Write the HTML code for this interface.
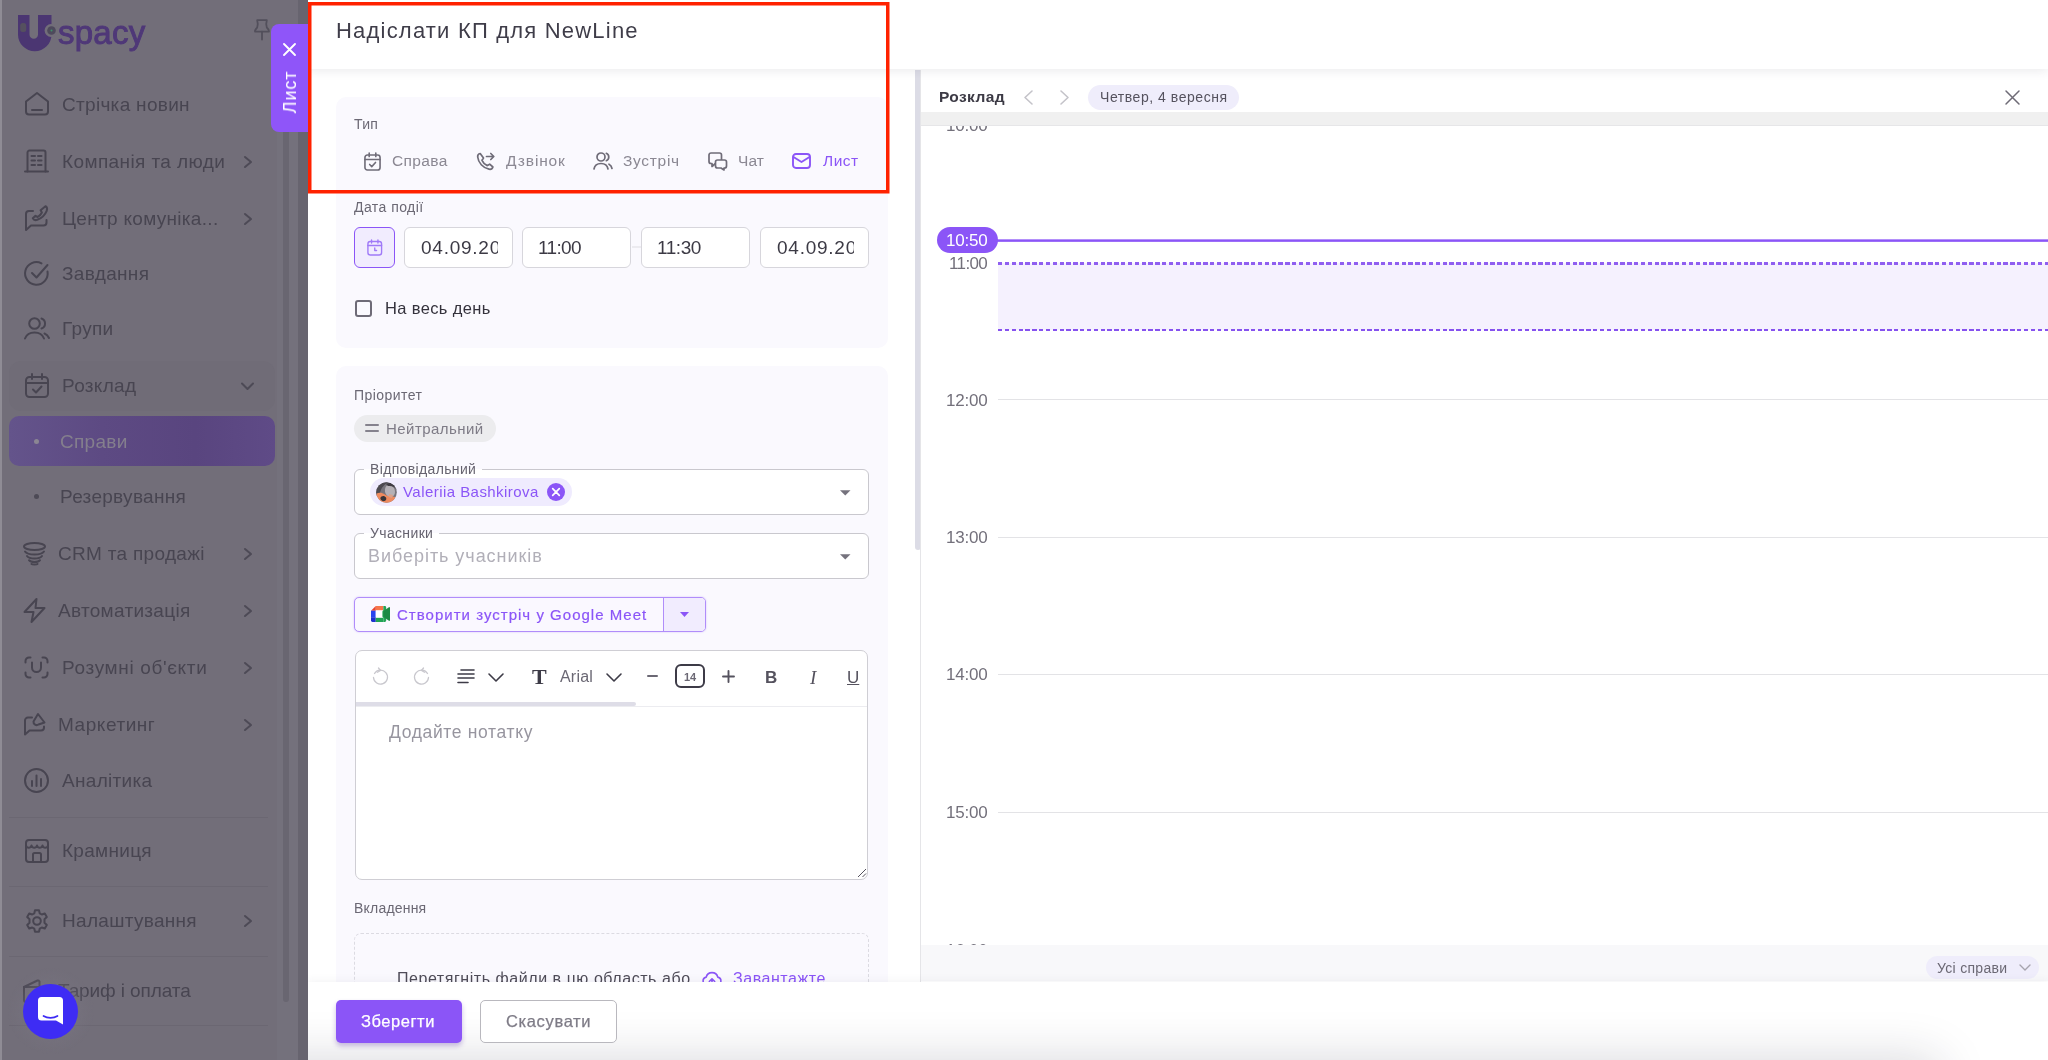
<!DOCTYPE html>
<html lang="uk">
<head>
<meta charset="utf-8">
<title>Uspacy — Надіслати КП для NewLine</title>
<style>
*{box-sizing:border-box;margin:0;padding:0}
html,body{width:2048px;height:1060px;overflow:hidden;background:#fff}
body{font-family:"Liberation Sans",sans-serif;position:relative;color:#4a4755}
.abs{position:absolute}
.t{position:absolute;white-space:nowrap;line-height:1;transform:translateY(-50%);will-change:transform}
svg{position:absolute;overflow:visible}
/* ---------- sidebar (dimmed) ---------- */
#side{position:absolute;left:0;top:0;width:308px;height:1060px;background:#726e79;overflow:hidden}
#side .strip{position:absolute;left:298px;top:0;width:10px;height:1060px;background:#67646f}
#side .strip2{position:absolute;left:277px;top:70px;width:21px;height:990px;background:#74717c}
#side .sb{position:absolute;left:283px;top:70px;width:6px;height:932px;background:#696671;border-radius:0 0 3px 3px}
#side .nav{color:#484551;font-size:19px;letter-spacing:.3px}
#side .hr{position:absolute;left:9px;width:259px;height:1px;background:#6b6772}
#side .ic{stroke:#484551;fill:none;stroke-width:2;stroke-linecap:round;stroke-linejoin:round}
#side .chev{stroke:#4d4a56;fill:none;stroke-width:2;stroke-linecap:round;stroke-linejoin:round}
/* ---------- panel ---------- */
#panel{position:absolute;left:308px;top:0;width:1740px;height:1060px;background:#fff;overflow:hidden}

#panel .lbl{font-size:14px;color:#6b6874;letter-spacing:.45px}
#panel .card{position:absolute;left:28px;width:552px;background:#faf9fe;border-radius:10px}
.ti{stroke:#6f6c78;fill:none;stroke-width:1.7;stroke-linecap:round;stroke-linejoin:round}
.typ{font-size:15.500px;color:#8b8893;letter-spacing:.55px}
.inp{position:absolute;top:227px;height:41px;width:109px;overflow:hidden;border:1px solid #d7d6dc;border-radius:6px;background:#fff}
.inp span{will-change:transform;position:absolute;left:15.500px;top:10px;width:77px;overflow:hidden;font-size:19px;color:#3c3a45;letter-spacing:.75px;white-space:nowrap;line-height:1}
.fs{position:absolute;left:46px;width:515px;height:46px;border:1px solid #c9c8ce;border-radius:6px;background:#fff}
.fs .lg{will-change:transform;position:absolute;left:9px;top:-9px;height:16px;padding:0 6px;background:linear-gradient(180deg,#faf9fe 0,#faf9fe 8px,#fff 8px,#fff 100%);font-size:14px;color:#66636f;letter-spacing:.35px;line-height:16px;white-space:nowrap}
.hl{position:absolute;left:690px;width:1050px;height:1px;background:#e3e3e6}
.tm{font-size:17px;color:#73707b;letter-spacing:-.2px}
.tb{stroke:#3d3b47;fill:none;stroke-width:1.6;stroke-linecap:round;stroke-linejoin:round}
</style>
</head>
<body>
<div id="side">
  <div class="strip2"></div><div class="sb"></div><div class="strip"></div>
  <div class="abs" style="left:0;top:0;width:2px;height:1060px;background:#8f8c95"></div>
  <!-- logo -->
  <svg style="left:18px;top:15px" width="36" height="38" viewBox="0 0 36 38">
    <path d="M0 0H11.500V19.500a4.250 4.250 0 0 0 8.500 0V0H33.500V19.500a16.750 16.750 0 0 1-33.500 0Z" fill="#4b3672"/>
    <circle cx="33" cy="15.5" r="6.4" fill="#726e79"/>
    <circle cx="33.5" cy="15.5" r="4.3" fill="#4e4a5c"/>
    <circle cx="33.5" cy="15.5" r="1" fill="#3f8f6a"/>
    <rect x="2.2" y="8" width="6" height="9" rx="2.5" fill="#55505f"/>
  </svg>
  <div class="t" style="left:58px;font-size:33px;color:#4f3878;letter-spacing:.25px;top:16px;transform:none;-webkit-text-stroke:.95px #4f3878">spacy</div>
  <!-- pin -->
  <svg style="left:254px;top:19px" width="16" height="22" viewBox="0 0 16 22" fill="none" stroke="#524f5b" stroke-width="1.8" stroke-linejoin="round" stroke-linecap="round">
    <path d="M3.2 1.2H12.8C12 4 12 6.5 12.8 8.5C14 9.5 15 11 15 12.6H1C1 11 2 9.5 3.2 8.5C4 6.5 4 4 3.2 1.2Z"/><path d="M8 12.6V20.5"/>
  </svg>
  <!-- nav items -->
  <svg class="ic" style="left:25px;top:92px" width="24" height="24" viewBox="0 0 24 24"><path d="M1 9.5L12 1L23 9.5V19.5a3 3 0 0 1-3 3H4a3 3 0 0 1-3-3Z"/><path d="M7 18H17"/></svg>
  <div class="t nav" style="left:62px;top:95px;transform:none">Стрічка новин</div>

  <svg class="ic" style="left:24px;top:149px" width="25" height="24" viewBox="0 0 25 24"><path d="M3.5 22.5V3.5a2 2 0 0 1 2-2H19.5a2 2 0 0 1 2 2V22.5"/><path d="M1 22.5H24"/><path d="M7.5 7H11M14 7H17.5M7.5 11.5H11M14 11.5H17.5M7.5 16H11M14 16H17.5"/></svg>
  <div class="t nav" style="left:62px;letter-spacing:.4px;top:152px;transform:none">Компанія та люди</div>
  <svg class="chev" style="left:244px;top:156px" width="8" height="12" viewBox="0 0 8 12"><path d="M1 1L7 6L1 11"/></svg>

  <svg class="ic" style="left:24px;top:205px" width="25" height="27" viewBox="0 0 25 27"><path d="M9 6H5a3 3 0 0 0-3 3V25L7 20.5H19.5a3 3 0 0 0 3-3V15"/><path d="M21.5 1.2c1.6 1 2 2.6 1.2 4.6c-1.7 4.2-5.500 7.500-9.500 9c-2 .7-3.500.2-4.400-1.500l2.700-2.500l2.200 1.200c1.800-1 3.300-2.600 4.200-4.500l-1.300-2.200Z"/></svg>
  <div class="t nav" style="left:62px;top:209px;transform:none">Центр комуніка...</div>
  <svg class="chev" style="left:244px;top:213px" width="8" height="12" viewBox="0 0 8 12"><path d="M1 1L7 6L1 11"/></svg>

  <svg class="ic" style="left:24px;top:261px" width="26" height="26" viewBox="0 0 26 26"><path d="M23.500 10.500A11.3 11.3 0 1 1 17.500 2.400"/><path d="M8 12L12.500 16.500L23.500 4"/></svg>
  <div class="t nav" style="left:62px;top:264px;transform:none">Завдання</div>

  <svg class="ic" style="left:24px;top:317px" width="26" height="23" viewBox="0 0 26 23"><circle cx="10.500" cy="6.500" r="5.300"/><path d="M1 21.500c1.500-4 5-6 9.500-6s8 2 9.500 6"/><path d="M17.500 1.500a5.300 5.300 0 0 1 0 10"/><path d="M20.500 16.500c2 .8 3.500 2.300 4.500 4.500"/></svg>
  <div class="t nav" style="left:62px;top:319px;transform:none">Групи</div>

  <div class="abs" style="left:9px;top:361px;width:266px;height:50px;border-radius:12px;background:#706c77"></div>
  <svg class="ic" style="left:25px;top:373px" width="24" height="25" viewBox="0 0 24 25"><rect x="1" y="4" width="22" height="20" rx="3.500"/><path d="M1 10H23M7 1V6M17 1V6"/><path d="M8 16.500L11 19.500L16.500 13.500"/></svg>
  <div class="t nav" style="left:62px;top:376px;transform:none">Розклад</div>
  <svg class="chev" style="left:241px;top:382px" width="13" height="9" viewBox="0 0 13 9"><path d="M1 1.500L6.500 7L12 1.500"/></svg>

  <div class="abs" style="left:9px;top:416px;width:266px;height:50px;border-radius:10px;background:linear-gradient(90deg,#64548b 0%,#5d4a83 35%,#59457f 70%,#5f4b87 100%)"></div>
  <div class="abs" style="left:34px;top:438.500px;width:5px;height:5px;border-radius:50%;background:#8b8693"></div>
  <div class="t nav" style="left:60px;color:#847f8d;top:432px;transform:none">Справи</div>
  <div class="abs" style="left:34px;top:493.500px;width:5px;height:5px;border-radius:50%;background:#4d4a56"></div>
  <div class="t nav" style="left:60px;top:487px;transform:none">Резервування</div>

  <svg class="ic" style="left:23px;top:542px" width="23" height="24" viewBox="0 0 23 24"><ellipse cx="11.500" cy="4.500" rx="10.500" ry="3.500"/><path d="M2 9.500c1.500 2.200 5 3 9.500 3s8-.800 9.500-3"/><path d="M4 14c1.300 1.800 4 2.500 7.500 2.500s6.200-.700 7.500-2.500"/><path d="M6 18.200c1 1.400 3 1.900 5.500 1.900s4.500-.500 5.500-1.900"/><path d="M8.500 22c.8.700 5.200.700 6 0"/></svg>
  <div class="t nav" style="left:58px;top:544px;transform:none">CRM та продажі</div>
  <svg class="chev" style="left:244px;top:548px" width="8" height="12" viewBox="0 0 8 12"><path d="M1 1L7 6L1 11"/></svg>

  <svg class="ic" style="left:23px;top:598px" width="23" height="25" viewBox="0 0 23 25"><path d="M13.500 1L1.500 14H10.500L8.500 24L21.500 10H12.500Z"/></svg>
  <div class="t nav" style="left:58px;top:601px;transform:none">Автоматизація</div>
  <svg class="chev" style="left:244px;top:605px" width="8" height="12" viewBox="0 0 8 12"><path d="M1 1L7 6L1 11"/></svg>

  <svg class="ic" style="left:24px;top:656px" width="25" height="23" viewBox="0 0 25 23"><path d="M1.500 6.500V5a3.500 3.500 0 0 1 3.500-3.500H6.500M18.500 1.500H20a3.500 3.500 0 0 1 3.500 3.500V6.500M23.500 16.500V18a3.500 3.500 0 0 1-3.500 3.500H18.500M6.500 21.500H5a3.500 3.500 0 0 1-3.500-3.500V16.500"/><path d="M8 6.500V11.500a4.500 4.500 0 0 0 9 0V6.500"/></svg>
  <div class="t nav" style="left:62px;letter-spacing:.65px;top:658px;transform:none">Розумні об'єкти</div>
  <svg class="chev" style="left:244px;top:662px" width="8" height="12" viewBox="0 0 8 12"><path d="M1 1L7 6L1 11"/></svg>

  <svg class="ic" style="left:24px;top:713px" width="22" height="23" viewBox="0 0 22 23"><path d="M8 4.500H4a3 3 0 0 0-3 3V21.500L5.500 17.500H17a3 3 0 0 0 3-3V13.500"/><path d="M14 1L20.500 9.500L14.500 11.500a3.200 3.200 0 0 1-5-3Z"/></svg>
  <div class="t nav" style="left:58px;letter-spacing:.55px;top:715px;transform:none">Маркетинг</div>
  <svg class="chev" style="left:244px;top:719px" width="8" height="12" viewBox="0 0 8 12"><path d="M1 1L7 6L1 11"/></svg>

  <svg class="ic" style="left:24px;top:768px" width="25" height="25" viewBox="0 0 25 25"><circle cx="12.500" cy="12.500" r="11.500"/><path d="M8 18V13M12.500 18V7.500M17 18V11"/></svg>
  <div class="t nav" style="left:62px;top:771px;transform:none">Аналітика</div>

  <div class="hr" style="top:817px"></div>
  <svg class="ic" style="left:25px;top:839px" width="24" height="24" viewBox="0 0 24 24"><rect x="1" y="1" width="22" height="22" rx="3"/><path d="M1 6.500c1 3 4.500 3 5.500 0c1 3 4.500 3 5.500 0c1 3 4.500 3 5.500 0c1 3 4.500 3 5.500 0"/><path d="M8 23V15.500a1.500 1.500 0 0 1 1.500-1.500H14.500a1.500 1.500 0 0 1 1.500 1.500V23"/></svg>
  <div class="t nav" style="left:62px;top:841px;transform:none">Крамниця</div>
  <div class="hr" style="top:886px"></div>
  <svg class="ic" style="left:25px;top:909px" width="24" height="24" viewBox="0 0 24 24"><circle cx="12" cy="12" r="3.800"/><path d="M10 1.200H14L14.700 4.300L16.800 5.500L19.800 4.500L21.800 8L19.500 10.200V13.800L21.800 16L19.800 19.500L16.800 18.500L14.700 19.700L14 22.800H10L9.300 19.700L7.200 18.500L4.200 19.500L2.200 16L4.500 13.800V10.200L2.200 8L4.200 4.500L7.200 5.500L9.300 4.300Z"/></svg>
  <div class="t nav" style="left:62px;top:911px;transform:none">Налаштування</div>
  <svg class="chev" style="left:244px;top:915px" width="8" height="12" viewBox="0 0 8 12"><path d="M1 1L7 6L1 11"/></svg>
  <div class="hr" style="top:956px"></div>
  <svg class="ic" style="left:23px;top:979px" width="24" height="24" viewBox="0 0 24 24"><path d="M1 8V21a2 2 0 0 0 2 2H21a2 2 0 0 0 2-2V8Z"/><path d="M1 8L14.500 1.500a1.500 1.500 0 0 1 2 1V8"/></svg>
  <div class="t nav" style="left:58px;letter-spacing:-.1px;top:981px;transform:none">Тариф і оплата</div>
  <div class="hr" style="top:1025px"></div>
  <!-- chat bubble -->
  <div class="abs" style="left:6px;top:966px;width:90px;height:90px;border-radius:50%;background:radial-gradient(circle,rgba(122,118,131,.35) 40%,rgba(118,114,127,0) 68%)"></div>
  <div class="abs" style="left:23px;top:984px;width:55px;height:55px;border-radius:50%;background:#3e2cf4"></div>
  <svg style="left:38px;top:997px" width="25" height="28" viewBox="0 0 25 28"><path d="M3.500 0H21.500a3.500 3.500 0 0 1 3.500 3.500V27.500L18 23.500H3.500a3.500 3.500 0 0 1-3.500-3.500V3.500a3.500 3.500 0 0 1 3.500-3.500Z" fill="#fff"/><path d="M5.500 19c4 2.600 10 2.600 14 0" fill="none" stroke="#3e2cf4" stroke-width="1.700" stroke-linecap="round"/></svg>

</div>
<div id="panel">
  <!-- left form column backgrounds -->
  <div class="card" style="top:97px;height:251px"></div>
  <div class="card" style="top:366px;height:720px"></div>

  <!-- card 1 -->
  <div class="t lbl" style="left:46px;letter-spacing:.2px;top:117px;transform:none">Тип</div>
  <svg class="ti" style="left:56px;top:152px" width="17" height="19" viewBox="0 0 18 19" preserveAspectRatio="none"><rect x="1" y="3" width="16" height="15" rx="2.500"/><path d="M1 7.500H17M5.500 1V4.500M12.500 1V4.500M6 12.500L8.200 14.700L12.200 10.500"/></svg>
  <div class="t typ" style="left:84px;letter-spacing:.35px;top:153px;transform:none">Справа</div>
  <svg class="ti" style="left:168px;top:152px" width="19" height="19" viewBox="0 0 19 19"><path d="M4.200 1.500c-1.500.3-2.700 1.700-2.500 3.500c.6 5.700 5.200 10.800 11.300 12.200c1.800.4 3.400-.6 3.900-2.200l-3.200-2.800l-2.400 1.400c-2.300-1-4.300-3-5.300-5.300l1.500-2.300Z"/><path d="M10.500 4.500H17.500M14.800 1.500L17.800 4.500L14.800 7.500"/></svg>
  <div class="t typ" style="left:198px;letter-spacing:.85px;top:153px;transform:none">Дзвінок</div>
  <svg class="ti" style="left:285px;top:152px" width="20" height="18" viewBox="0 0 20 18"><circle cx="8" cy="5" r="4"/><path d="M1 17c.6-3.500 3.200-5.500 7-5.500s6.400 2 7 5.500"/><path d="M13.300 1.300a4 4 0 0 1 0 7.400M16 12.200c1.700.8 2.700 2.300 3 4.300"/></svg>
  <div class="t typ" style="left:314.500px;letter-spacing:.7px;top:153px;transform:none">Зустріч</div>
  <svg class="ti" style="left:400px;top:152px" width="20" height="19" viewBox="0 0 20 19"><path d="M13.500 9.500V3a2 2 0 0 0-2-2H3a2 2 0 0 0-2 2V9.500a2 2 0 0 0 2 2H4V14.500L7.500 11.500"/><path d="M9.500 8H16.500a2 2 0 0 1 2 2V14a2 2 0 0 1-2 2H16V18L13 16H9.500a2 2 0 0 1-2-2V10a2 2 0 0 1 2-2Z" fill="#faf9fe"/></svg>
  <div class="t typ" style="left:430px;letter-spacing:.1px;top:153px;transform:none">Чат</div>
  <svg class="ti" style="left:484px;top:153px;stroke:#8b55f7;stroke-width:1.900" width="19" height="16" viewBox="0 0 19 16"><rect x="1" y="1" width="17" height="14" rx="3"/><path d="M1.500 4L9.500 9L17.500 4"/></svg>
  <div class="t typ" style="left:515px;color:#8b55f7;letter-spacing:.5px;top:153px;transform:none">Лист</div>

  <div class="t lbl" style="left:46px;top:200px;transform:none">Дата події</div>
  <div class="abs" style="left:46px;top:227px;width:41px;height:41px;border:1px solid #8b55f7;border-radius:6px;background:#f1ecfe"></div>
  <svg style="left:59px;top:239px;fill:none;stroke:#a07af8;stroke-width:1.500;stroke-linecap:round;stroke-linejoin:round" width="15.500" height="17" viewBox="0 0 17 17" preserveAspectRatio="none"><rect x="1" y="2.500" width="15" height="13.500" rx="2.500"/><path d="M1 6.500H16M5 1V4M12 1V4M8.500 9V11.500H10.500"/></svg>
  <div class="inp" style="left:96px"><span>04.09.20</span></div>
  <div class="inp" style="left:214px"><span style="letter-spacing:-.65px;left:15px">11:00</span></div>
  <div class="abs" style="left:324px;top:246px;width:9px;height:2px;background:#ecebf0"></div>
  <div class="inp" style="left:333px"><span style="letter-spacing:-.45px;left:15px">11:30</span></div>
  <div class="inp" style="left:452px"><span>04.09.20</span></div>
  <div class="abs" style="left:46.500px;top:299.500px;width:17px;height:17px;border:2px solid #6e6b77;border-radius:3px"></div>
  <div class="t" style="left:77px;font-size:16.500px;color:#34323c;letter-spacing:.35px;top:300px;transform:none">На весь день</div>

  <!-- card 2 -->
  <div class="t lbl" style="left:46px;top:388px;transform:none">Пріоритет</div>
  <div class="abs" style="left:46px;top:415px;width:142px;height:27px;border-radius:14px;background:#ececee"></div>
  <div class="abs" style="left:57px;top:424px;width:14px;height:2px;background:#85828d;border-radius:1px"></div>
  <div class="abs" style="left:57px;top:430px;width:14px;height:2px;background:#85828d;border-radius:1px"></div>
  <div class="t" style="left:78px;font-size:15px;color:#7e7b86;letter-spacing:.45px;top:421px;transform:none">Нейтральний</div>

  <div class="fs" style="top:469px"><div class="lg">Відповідальний</div></div>
  <div class="abs" style="left:62px;top:478px;width:202px;height:28px;border-radius:14px;background:#efebfe"></div>
  <svg style="left:67.500px;top:481.500px" width="21" height="21" viewBox="0 0 21 21"><defs><clipPath id="av"><circle cx="10.500" cy="10.500" r="10.300"/></clipPath></defs><g clip-path="url(#av)"><rect width="21" height="21" fill="#77747c"/><path d="M0 0H14C8 2 5 6 4 11L0 14Z" fill="#4c4950"/><path d="M11 3.500c4-1 8 2 8 6.500c0 2.500-1.500 4.500-3.500 5c-3 .5-6-2-6.500-5.500c-.300-2.500.300-5 2-6Z" fill="#b5b0b6"/><path d="M10 2c4-2.500 10 0 11 6c-2-3-5-4.500-9-4Z" fill="#3f3c43"/><path d="M0 12c3-2 6-1.500 9 .500c2 1.500 5 2.500 8 2l3 1V21H0Z" fill="#ee8a5f"/><path d="M5.500 14.500c1.500-1 3.500-.500 4.500 1c.800 1.500 0 3-1.500 3.500s-3.500-.500-4-2c-.300-1 .200-2 1-2.500Z" fill="#3a3538"/><path d="M13 12l4 1l-1 3l-3.500-1Z" fill="#d9a08a"/></g></svg>
  <div class="t" style="left:95px;font-size:15px;color:#8b55f7;letter-spacing:.45px;top:484px;transform:none">Valeriia Bashkirova</div>
  <svg style="left:239px;top:483px" width="18" height="18" viewBox="0 0 18 18"><circle cx="9" cy="9" r="9" fill="#8b55f7"/><path d="M5.700 5.700L12.300 12.300M12.300 5.700L5.700 12.300" stroke="#fff" stroke-width="1.700" stroke-linecap="round"/></svg>
  <svg style="left:531.500px;top:489.500px" width="10.500" height="5.500" viewBox="0 0 12 6"><path d="M0 0H12L6 6Z" fill="#75727d"/></svg>

  <div class="fs" style="top:533px"><div class="lg">Учасники</div></div>
  <div class="t" style="left:60px;font-size:18px;color:#b1afb8;letter-spacing:.95px;top:547px;transform:none">Виберіть учасників</div>
  <svg style="left:531.500px;top:553.500px" width="10.500" height="5.500" viewBox="0 0 12 6"><path d="M0 0H12L6 6Z" fill="#75727d"/></svg>

  <div class="abs" style="left:46px;top:597px;width:352px;height:35px;border:1px solid #b08dfa;border-radius:5px;background:#faf8ff;box-shadow:0 0 2px rgba(139,85,247,.35)"></div>
  <div class="abs" style="left:355px;top:598px;width:42px;height:33px;border-left:1px solid #b08dfa;background:#f1ecfe;border-radius:0 4px 4px 0"></div>
  <svg style="left:63px;top:606px" width="19" height="16" viewBox="0 0 20 17" preserveAspectRatio="none"><path d="M5 0H13V4.500H5Z" fill="#f6764a"/><path d="M0 5L5 0V5Z" fill="#e8452e"/><path d="M0 5H5V12H0Z" fill="#2a44f0"/><path d="M0 12H5V17H1.500A1.500 1.500 0 0 1 0 15.500Z" fill="#1d2fd0"/><path d="M5 12.500H13V17H5Z" fill="#22a455"/><path d="M13 0H14.500A1.500 1.500 0 0 1 16 1.500V15.500A1.500 1.500 0 0 1 14.500 17H13V12.500L11 10.500V6.500L13 4.500Z" fill="#22a455"/><path d="M13 5.500L18.800 1.200C19.300 .9 20 1.200 20 1.800V15.200C20 15.800 19.300 16.100 18.800 15.800L13 11.500Z" fill="#1c8a45"/><rect x="5" y="5" width="7" height="7" fill="#fff"/></svg>
  <div class="t" style="left:89px;font-size:15px;color:#8b55f7;letter-spacing:1.02px;-webkit-text-stroke:.2px #8b55f7;top:607px;transform:none">Створити зустріч у Google Meet</div>
  <svg style="left:371.500px;top:612px" width="9" height="5" viewBox="0 0 11 6"><path d="M0 0H11L5.500 6Z" fill="#8b55f7"/></svg>

  <!-- editor -->
  <div class="abs" style="left:47px;top:650px;width:513px;height:230px;border:1px solid #cfced4;border-radius:7px;background:#fff"></div>
  <div class="abs" style="left:48px;top:706px;width:511px;height:1px;background:#ececf0"></div>
  <div class="abs" style="left:48px;top:702px;width:280px;height:4px;background:#dedde7;border-radius:0 2px 2px 0"></div>
  <svg style="left:64px;top:667px;fill:none;stroke:#c9c8ce;stroke-width:1.300;stroke-linecap:round;stroke-linejoin:round" width="17" height="18" viewBox="0 0 17 18"><path d="M2.500 6.500A7 7 0 1 1 1.500 10.500"/><path d="M6.500 1L8.500 3.500L5.500 5.200" /></svg>
  <svg style="left:105px;top:667px;fill:none;stroke:#c9c8ce;stroke-width:1.300;stroke-linecap:round;stroke-linejoin:round" width="17" height="18" viewBox="0 0 17 18"><path d="M14.500 6.500A7 7 0 1 0 15.500 10.500"/><path d="M10.500 1L8.500 3.500L11.500 5.200"/></svg>
  <svg class="tb" style="left:149px;top:669px" width="18" height="15" viewBox="0 0 18 15"><path d="M4 1H17M1 5H17M1 9H17M1 13.500H11"/></svg>
  <svg class="tb" style="left:180px;top:673px" width="16" height="9" viewBox="0 0 16 9"><path d="M1 1L8 8L15 1"/></svg>
  <div class="t" style="left:224px;font-family:'Liberation Serif',serif;font-weight:bold;font-size:22px;color:#3d3b47;top:666px;transform:none">T</div>
  <div class="t" style="left:252px;font-size:16px;color:#6b6874;letter-spacing:.2px;top:669px;transform:none">Arial</div>
  <svg class="tb" style="left:298px;top:673px" width="16" height="9" viewBox="0 0 16 9"><path d="M1 1L8 8L15 1"/></svg>
  <div class="abs" style="left:338.500px;top:675px;width:11px;height:2px;background:#6b6874;border-radius:1px"></div>
  <div class="abs" style="left:367px;top:664px;width:30px;height:24px;border:2px solid #3d3b47;border-radius:6px"></div>
  <div class="t" style="left:375.500px;font-size:11px;color:#6b6874;font-weight:bold;top:672px;transform:none">14</div>
  <svg style="left:413.500px;top:670px;fill:none;stroke:#55525e;stroke-width:1.900;stroke-linecap:round" width="13" height="13" viewBox="0 0 13 13"><path d="M6.500 1V12M1 6.500H12"/></svg>
  <div class="t" style="left:456.500px;font-size:17px;font-weight:bold;color:#55525e;top:669px;transform:none">B</div>
  <div class="t" style="left:501.500px;font-family:'Liberation Serif',serif;font-style:italic;font-size:19px;color:#55525e;top:668px;transform:none">I</div>
  <div class="t" style="left:539px;font-size:17px;color:#55525e;text-decoration:underline;top:669px;transform:none">U</div>
  <div class="t" style="left:80.500px;font-size:17.500px;color:#97959f;letter-spacing:.65px;top:724px;transform:none">Додайте нотатку</div>
  <svg style="left:549px;top:868px;fill:none;stroke:#55525e;stroke-width:1" width="10" height="10" viewBox="0 0 10 10"><path d="M1 9L9 1M5.500 9L9 5.500"/></svg>

  <div class="t lbl" style="left:46px;letter-spacing:.2px;top:901px;transform:none">Вкладення</div>
  <div class="abs" style="left:46px;top:933px;width:515px;height:120px;border:1px dashed #dcdbe2;border-radius:7px"></div>
  <div class="t" style="left:89px;font-size:16px;color:#4f4c58;letter-spacing:.55px;top:971px;transform:none">Перетягніть файли в цю область або</div>
  <svg style="left:394px;top:969.500px;fill:none;stroke:#8b55f7;stroke-width:1.600;stroke-linecap:round;stroke-linejoin:round" width="20" height="17" viewBox="0 0 20 17"><path d="M6 15H5a4 4 0 0 1-.800-7.900a6 6 0 0 1 11.600 0A4 4 0 0 1 15 15H14"/><path d="M10 16V9M7.300 11.500L10 8.800L12.700 11.500"/></svg>
  <div class="t" style="left:425px;font-size:16px;color:#8b55f7;letter-spacing:.55px;top:971px;transform:none">Завантажте</div>

  <!-- form scrollbar + divider -->
  <div class="abs" style="left:607px;top:70px;width:6px;height:480px;background:#dcdce6;border-radius:0 0 3px 3px"></div>
  <div class="abs" style="left:612px;top:70px;width:1px;height:912px;background:#e5e5e8"></div>

  <!-- schedule -->
  <div id="sch" class="abs" style="left:613px;top:112px;width:1127px;height:833px;background:#fff;overflow:hidden">
  </div>
  <div class="abs" style="left:613px;top:112px;width:1127px;height:13px;background:#f0f0f0"></div>
  <div class="abs" style="left:613px;top:125px;width:1127px;height:1px;background:#e6e6e8"></div>
  <div class="t tm" style="left:638px;clip-path:inset(9px 0 0 0);top:117px;transform:none">10:00</div>
  <div class="t tm" style="left:641px;top:255px;letter-spacing:-.62px;transform:none">11:00</div>
  <div class="t tm" style="left:638px;top:392px;transform:none">12:00</div>
  <div class="t tm" style="left:638px;top:529px;transform:none">13:00</div>
  <div class="t tm" style="left:638px;top:666px;transform:none">14:00</div>
  <div class="t tm" style="left:638px;top:804px;transform:none">15:00</div>
  <div class="t tm" style="left:638px;clip-path:inset(0 0 14px 0);top:942px;transform:none">16:00</div>
  <div class="hl" style="top:399px"></div>
  <div class="hl" style="top:536.500px"></div>
  <div class="hl" style="top:674px"></div>
  <div class="hl" style="top:811.500px"></div>
  <div class="abs" style="left:689.500px;top:263px;width:1051px;height:67px;background:#f5f1fe"></div>
  <div class="abs" style="left:689.500px;top:262px;width:1051px;height:3px;background:repeating-linear-gradient(90deg,#8652ef 0,#8652ef 4.300px,rgba(245,241,254,0) 4.300px,rgba(245,241,254,0) 6.840px);opacity:.92"></div>
  <div class="abs" style="left:689.500px;top:329px;width:1051px;height:2px;background:repeating-linear-gradient(90deg,#8652ef 0,#8652ef 4.300px,rgba(245,241,254,0) 4.300px,rgba(245,241,254,0) 6.840px)"></div>
  <div class="abs" style="left:689px;top:239px;width:1051px;height:3px;background:linear-gradient(180deg,rgba(139,85,247,.65) 0,rgba(139,85,247,.65) 1px,#8b55f7 1px,#8b55f7 2px,rgba(139,85,247,.85) 2px,rgba(139,85,247,.85) 3px)"></div>
  <div class="abs" style="left:629px;top:227px;width:61px;height:26px;border-radius:13px;background:#8b55f7"></div>
  <div class="t" style="left:638px;font-size:17px;color:#fff;letter-spacing:-.2px;top:232px;transform:none">10:50</div>

  <div class="t" style="left:631px;font-size:15.500px;font-weight:bold;color:#3c3a45;letter-spacing:.4px;top:89px;transform:none">Розклад</div>
  <svg style="left:716px;top:90px;fill:none;stroke:#c4c3c9;stroke-width:1.600;stroke-linecap:round;stroke-linejoin:round" width="9" height="15" viewBox="0 0 9 15"><path d="M8 1L1 7.500L8 14"/></svg>
  <svg style="left:752px;top:90px;fill:none;stroke:#c4c3c9;stroke-width:1.600;stroke-linecap:round;stroke-linejoin:round" width="9" height="15" viewBox="0 0 9 15"><path d="M1 1L8 7.500L1 14"/></svg>
  <div class="abs" style="left:780px;top:85px;width:151px;height:25px;border-radius:13px;background:#efedfb"></div>
  <div class="t" style="left:791.500px;font-size:14px;color:#55525e;letter-spacing:.55px;top:90px;transform:none">Четвер, 4 вересня</div>
  <svg style="left:1697px;top:90px;fill:none;stroke:#6e6b76;stroke-width:1.500;stroke-linecap:round" width="15" height="15" viewBox="0 0 15 15"><path d="M1 1L14 14M14 1L1 14"/></svg>

  <!-- bottom filter bar -->
  <div class="abs" style="left:613px;top:945px;width:1127px;height:36px;background:#f8f8fa"></div>
  <div class="abs" style="left:1618px;top:956px;width:113px;height:23px;border-radius:12px;background:#efedfb"></div>
  <div class="t" style="left:1629px;font-size:14px;color:#6b6874;letter-spacing:.3px;top:961px;transform:none">Усі справи</div>
  <svg style="left:1711px;top:964px;fill:none;stroke:#a6a4ad;stroke-width:1.400;stroke-linecap:round;stroke-linejoin:round" width="12" height="7" viewBox="0 0 12 7"><path d="M1 1L6 6L11 1"/></svg>

  <!-- header -->
  <div class="abs" style="left:0;top:0;width:1740px;height:69px;background:#fff;box-shadow:0 2px 10px rgba(60,55,80,.10)"></div>
  <div class="t" style="left:27.5px;font-size:22px;color:#3f3d49;letter-spacing:1.2px;top:20px;transform:none">Надіслати КП для NewLine</div>

  <!-- footer -->
  <div class="abs" style="left:0;top:982px;width:1740px;height:78px;background:#fff;box-shadow:0 -2px 8px rgba(60,55,80,.05)"></div>
  <div class="abs" style="left:-200px;top:1260px;width:1830px;height:100px;box-shadow:0 -200px 50px rgba(30,30,50,.175)"></div>
  <div class="abs" style="left:28px;top:1000px;width:126px;height:43px;border-radius:5px;background:#8b55f7;box-shadow:0 3px 5px rgba(80,40,160,.3)"></div>
  <div class="t" style="left:53px;font-size:16.500px;color:#fff;letter-spacing:.55px;top:1013px;transform:none;-webkit-text-stroke:.25px #fff">Зберегти</div>
  <div class="abs" style="left:172px;top:1000px;width:137px;height:43px;border-radius:5px;background:#fff;border:1px solid #b9b8be"></div>
  <div class="t" style="left:198px;font-size:16.500px;color:#7e7b86;letter-spacing:.65px;top:1013px;transform:none;-webkit-text-stroke:.25px #7e7b86">Скасувати</div>

  <!-- red highlight rectangle -->
  <svg style="left:0;top:2px" width="582" height="192" viewBox="0 0 582 192"><rect x="1.750" y="1.750" width="578" height="188" fill="none" stroke="#ff2200" stroke-width="3.500"/></svg>
</div>
<!-- tab -->
<div class="abs" style="left:271px;top:24px;width:37px;height:108px;background:#8f55f9;border-radius:8px 0 0 8px"></div>
<svg style="left:283px;top:43px;fill:none;stroke:#fff;stroke-width:1.900;stroke-linecap:round" width="13" height="13" viewBox="0 0 13 13"><path d="M1 1L12 12M12 1L1 12"/></svg>
<div class="abs" style="left:289.500px;top:91.500px;width:0;height:0"><div class="t" style="left:0;top:0;transform:translate(-50%,-50%) rotate(-90deg);font-size:18px;color:#fff;letter-spacing:.9px">Лист</div></div>
</body>
</html>
